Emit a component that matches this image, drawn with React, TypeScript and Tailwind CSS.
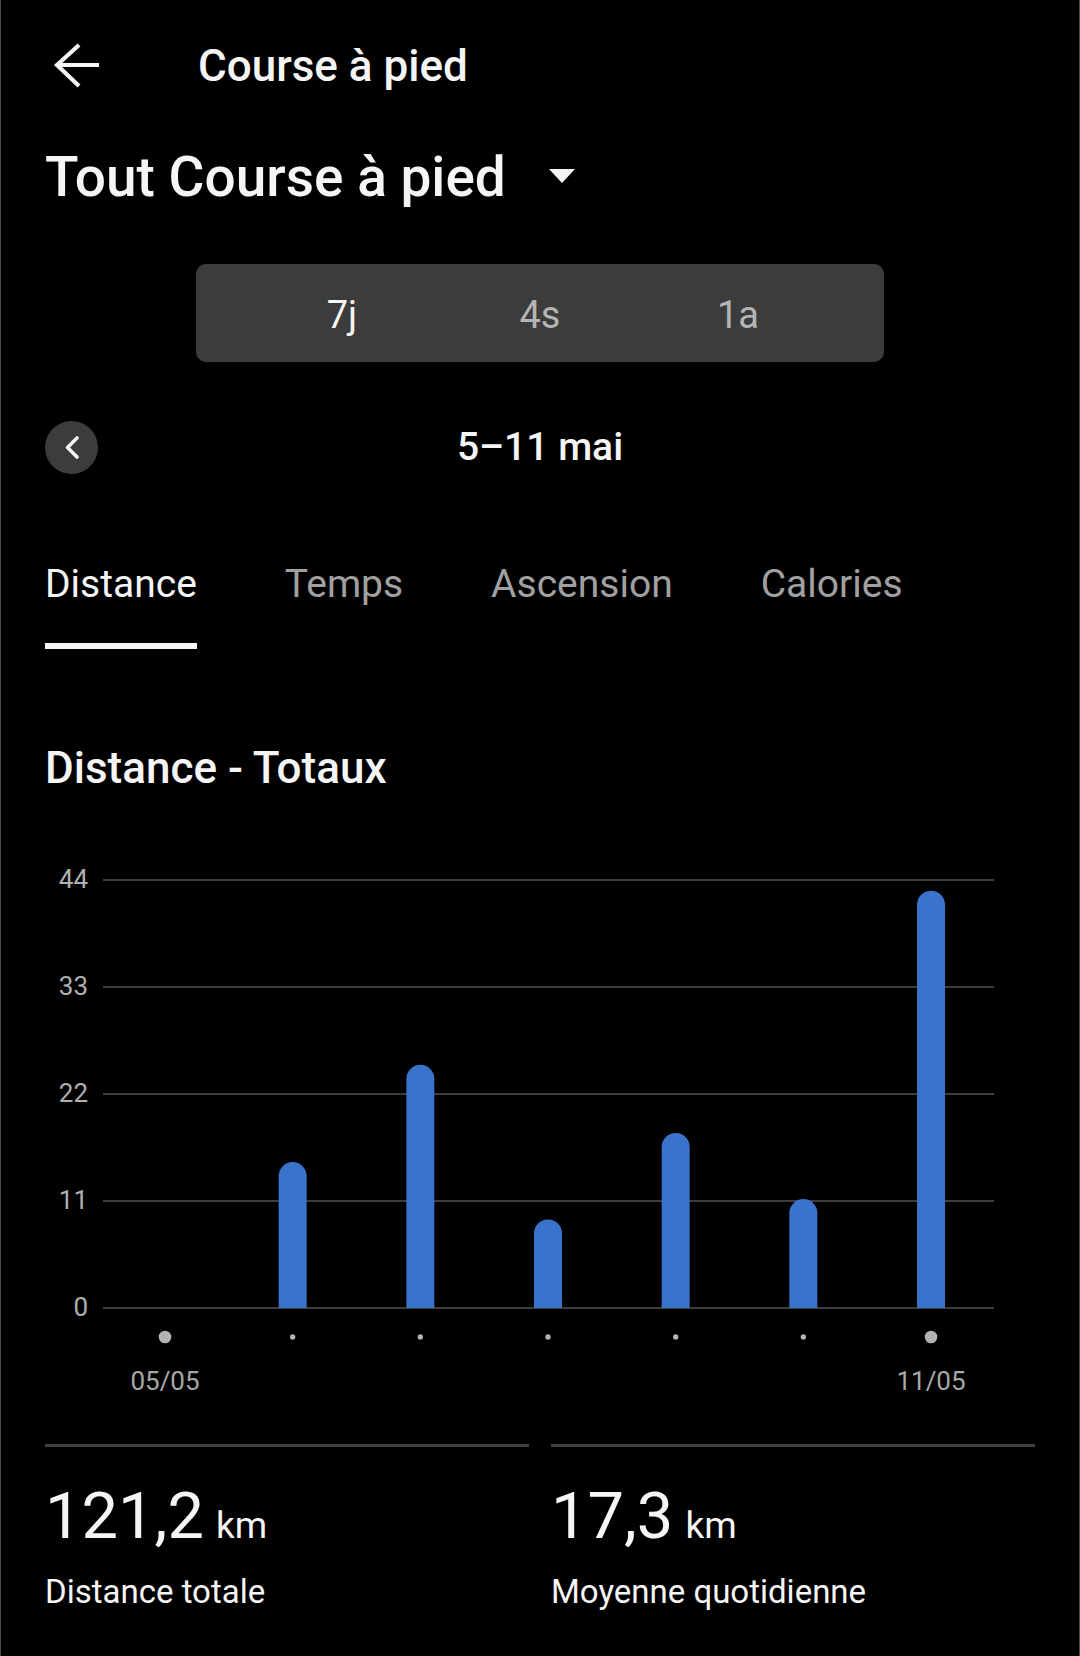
const days = [0, 15.0, 25.0, 9.1, 18.0, 11.2, 42.9];
const ticks = [44, 33, 22, 11, 0];

// chart geometry, in svg pixels
const BASE = 458;
const SCALE = 428 / 44;
const barX = (i: number) => 164 + i * 127.67;

function Chart() {
  return (
    <svg className="mt-[60px] block" width="1078" height="560" viewBox="0 0 1078 560">
      {ticks.map((t) => {
        const y = BASE - t * SCALE;
        return (
          <g key={t}>
            <line x1="102" x2="993" y1={y} y2={y} stroke="#3d3d3d" strokeWidth="2" />
            <text
              x="87"
              y={y + 8}
              textAnchor="end"
              fill="#b0b0b0"
              fontSize="26"
              fontFamily="Roboto, sans-serif"
            >
              {t}
            </text>
          </g>
        );
      })}

      {days.map((v, i) => {
        if (v <= 0) return null;
        const x = barX(i);
        const top = BASE - v * SCALE;
        return (
          <path
            key={i}
            d={`M${x - 14} ${BASE} V${top + 14} A14 14 0 0 1 ${x + 14} ${top + 14} V${BASE} Z`}
            fill="#3973cc"
          />
        );
      })}

      {days.map((_, i) => {
        const big = i === 0 || i === days.length - 1;
        return <circle key={i} cx={barX(i)} cy="487" r={big ? 6.3 : 2.7} fill="#b3b3b3" />;
      })}

      <text x={barX(0)} y="540" textAnchor="middle" fill="#a8a8a8" fontSize="26" fontFamily="Roboto, sans-serif">
        05/05
      </text>
      <text x={barX(6)} y="540" textAnchor="middle" fill="#a8a8a8" fontSize="26" fontFamily="Roboto, sans-serif">
        11/05
      </text>
    </svg>
  );
}

function Stat({ value, label }: { value: string; label: string }) {
  return (
    <div className="border-t-[3px] border-[#404040]">
      <div className="mt-[37px] flex items-baseline">
        <span className="text-[65px] leading-none">{value}</span>
        <span className="ml-[12px] text-[37px] leading-none">km</span>
      </div>
      <p className="mt-[26px] text-[33px] leading-none">{label}</p>
    </div>
  );
}

export default function App() {
  const ranges = ["7j", "4s", "1a"];
  const tabs = ["Distance", "Temps", "Ascension", "Calories"];

  return (
    <div className="h-[1656px] w-[1080px] overflow-hidden border-x border-[#4a4a4a] bg-black font-[Roboto,sans-serif] text-[#f5f5f5]">
      <div className="flex items-start pl-[44px] pt-[33px]">
        <svg width="64" height="64" viewBox="0 0 64 64" fill="none">
          <path d="M54 32H12M34 12L12 32L34 53" stroke="#f5f5f5" strokeWidth="4.2" strokeLinejoin="miter" />
        </svg>
        <h1 className="ml-[89px] mt-[11px] text-[44px] font-medium leading-none">Course à pied</h1>
      </div>

      <div className="mt-[53px] flex h-[54px] items-start px-[44px]">
        <h2 className="text-[55px] font-medium leading-none">Tout Course à pied</h2>
        <svg className="ml-[43px] mt-[19px]" width="26" height="14" viewBox="0 0 26 14">
          <path d="M0 0H26L13 14Z" fill="#f5f5f5" />
        </svg>
      </div>

      <div className="mx-auto mt-[60px] flex h-[98px] w-[688px] items-center justify-center rounded-[10px] bg-[#3c3c3c] pt-[4px]">
        {ranges.map((r, i) => (
          <span
            key={r}
            className={
              i === 0
                ? "w-[198px] text-center text-[38px] leading-none text-[#f5f5f5]"
                : "w-[198px] text-center text-[38px] leading-none text-[#b4b4b4]"
            }
          >
            {r}
          </span>
        ))}
      </div>

      <div className="mt-[59px] grid grid-cols-[53px_1fr_53px] items-center px-[44px]">
        <div className="flex h-[53px] w-[53px] items-center justify-center rounded-full bg-[#3c3c3c]">
          <svg width="53" height="53" viewBox="0 0 53 53" fill="none">
            <path d="M32 17L22.5 26.5L32 36" stroke="#f5f5f5" strokeWidth="3.6" strokeLinecap="round" strokeLinejoin="round" />
          </svg>
        </div>
        <p className="text-center text-[39px] font-medium leading-none">5–11 mai</p>
        <div />
      </div>

      <div className="mt-[91px] flex items-start gap-[88px] px-[44px]">
        {tabs.map((t, i) => (
          <div key={t} className="flex flex-col">
            <span className={i === 0 ? "text-[39px] leading-none" : "text-[39px] leading-none text-[#a0a0a0]"}>
              {t}
            </span>
            {i === 0 && <div className="mt-[39px] h-[6px] bg-[#f5f5f5]" />}
          </div>
        ))}
      </div>

      <h3 className="mt-[97px] px-[44px] text-[44px] font-medium leading-none">Distance - Totaux</h3>

      <Chart />

      <div className="mt-[34px] grid grid-cols-2 gap-x-[22px] px-[44px]">
        <Stat value="121,2" label="Distance totale" />
        <Stat value="17,3" label="Moyenne quotidienne" />
      </div>
    </div>
  );
}
